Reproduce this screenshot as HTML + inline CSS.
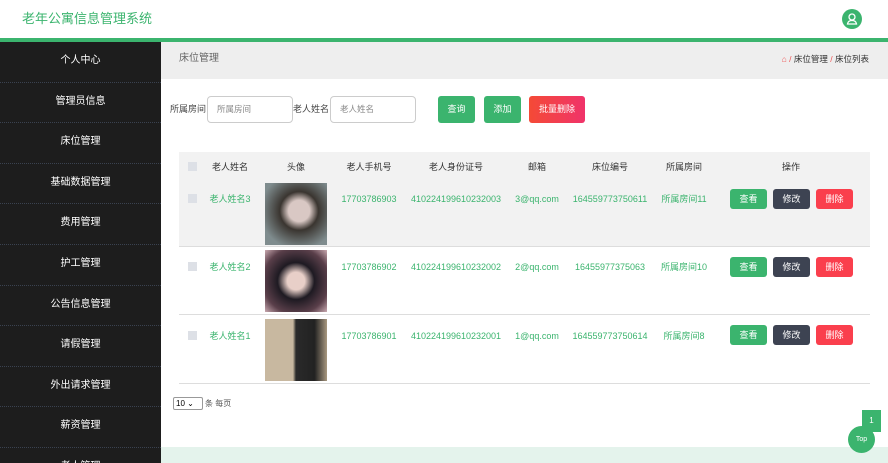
<!DOCTYPE html>
<html><head><meta charset="utf-8"><style>
*{box-sizing:border-box;margin:0;padding:0}
html,body{width:888px;height:463px;overflow:hidden}
body{font-family:"Liberation Sans","Noto Sans CJK SC",sans-serif;background:#fff;position:relative;font-size:9px}
.top{position:absolute;left:0;top:0;width:888px;height:42px;background:#fff;border-bottom:4px solid #3bb46e}
.title{position:absolute;left:22px;top:10px;font-size:13px;line-height:18px;color:#3bb46e}
.user{position:absolute;left:842px;top:9px;width:20px;height:20px;border-radius:50%;background:#3bb46e}
.side{position:absolute;left:0;top:42px;width:161px;height:421px;background:#1d1d1d;overflow:hidden}
.side div{height:40.6px;line-height:36px;padding-top:1px;text-align:center;color:#fff;font-size:10px;border-bottom:1px dotted #3a4250}
.crumb{position:absolute;left:161px;top:42px;width:727px;height:37px;background:#eee}
.crumb .h{position:absolute;left:18px;top:10px;font-size:10px;line-height:14px;color:#666}
.crumb .r{position:absolute;right:19px;top:11px;font-size:8.5px;line-height:12px;color:#333}
.crumb .r i{color:#e55;font-style:normal}
.lbl{position:absolute;top:103px;font-size:9px;line-height:12px;color:#444}
.inp{position:absolute;top:96px;height:27px;border:1px solid #ccc;border-radius:4px;font-size:8.5px;line-height:25px;color:#888;padding-left:9px}
.btn{position:absolute;color:#fff;border-radius:3px;text-align:center;font-size:9px}
.tbl{position:absolute;left:179px;top:152px;width:691px;height:232px;border-bottom:1px solid #ddd}
.hdr{position:absolute;left:0;top:0;width:691px;height:28px;background:#f2f2f2}
.row{position:absolute;left:0;width:691px;height:68px;border-bottom:1px solid #ddd}
.c{position:absolute;font-size:9px;line-height:12px;transform:translateX(-50%);white-space:nowrap}
.hd{color:#333;top:9px}
.g{color:#3bb46e}
.cb{position:absolute;left:9px;width:9px;height:9px;background:#dde0e6}
.av{position:absolute;left:86px;top:2px;width:62px;height:62px}
.ob{position:absolute;width:37px;height:20px;line-height:20px;border-radius:3px;color:#fff;text-align:center;font-size:9px}
</style></head><body>
<div class="top"><span class="title">老年公寓信息管理系统</span>
<div class="user"><svg width="20" height="20" viewBox="0 0 20 20"><circle cx="10" cy="8" r="3" fill="none" stroke="#fff" stroke-width="1.3"/><path d="M5.5 15 Q6 11.5 10 11.5 Q14 11.5 14.5 15 Z" fill="none" stroke="#fff" stroke-width="1.3"/></svg></div></div>
<div class="side">
<div>个人中心</div><div>管理员信息</div><div>床位管理</div><div>基础数据管理</div><div>费用管理</div><div>护工管理</div><div>公告信息管理</div><div>请假管理</div><div>外出请求管理</div><div>薪资管理</div><div>老人管理</div>
</div>
<div class="crumb"><span class="h">床位管理</span><span class="r"><i>⌂</i> <i>/</i> 床位管理 <i>/</i> 床位列表</span></div>
<span class="lbl" style="left:170px">所属房间</span>
<div class="inp" style="left:207px;width:86px">所属房间</div>
<span class="lbl" style="left:293px">老人姓名</span>
<div class="inp" style="left:330px;width:86px">老人姓名</div>
<div class="btn" style="left:438px;top:96px;width:37px;height:27px;line-height:27px;background:#3bb46e">查询</div>
<div class="btn" style="left:484px;top:96px;width:37px;height:27px;line-height:27px;background:#3bb46e">添加</div>
<div class="btn" style="left:529px;top:96px;width:56px;height:27px;line-height:27px;background:linear-gradient(90deg,#f44a36,#f0336a)">批量删除</div>
<div class="tbl">
<div class="hdr">
<div class="cb" style="top:10px"></div>
<span class="c hd" style="left:51px">老人姓名</span><span class="c hd" style="left:117px">头像</span><span class="c hd" style="left:190px">老人手机号</span><span class="c hd" style="left:277px">老人身份证号</span><span class="c hd" style="left:358px">邮箱</span><span class="c hd" style="left:431px">床位编号</span><span class="c hd" style="left:505px">所属房间</span><span class="c hd" style="left:612px">操作</span>
</div>
<div class="row" style="top:28px;background:#f2f2f2;height:67px">
<div class="cb" style="top:14px"></div>
<span class="c g" style="left:51px;top:13px">老人姓名3</span>
<div class="av" style="top:3px;background:radial-gradient(circle at 55% 45%,#d9c8c4 0 22%,#3a3530 40%,#7f8c8e 80%)"></div>
<span class="c g" style="left:190px;top:13px">17703786903</span><span class="c g" style="left:277px;top:13px">410224199610232003</span><span class="c g" style="left:358px;top:13px">3@qq.com</span><span class="c g" style="left:431px;top:13px">164559773750611</span><span class="c g" style="left:505px;top:13px">所属房间11</span>
<div class="ob" style="left:551px;top:9px;background:#3bb46e">查看</div><div class="ob" style="left:594px;top:9px;background:#3d4352">修改</div><div class="ob" style="left:637px;top:9px;background:#fa3f4d">删除</div>
</div>
<div class="row" style="top:95px">
<div class="cb" style="top:15px"></div>
<span class="c g" style="left:51px;top:14px">老人姓名2</span>
<div class="av" style="top:3px;background:radial-gradient(circle at 50% 50%,#e8cfc8 0 20%,#1e1a22 42%,#5a3f4a 75%,#c9a9b0)"></div>
<span class="c g" style="left:190px;top:14px">17703786902</span><span class="c g" style="left:277px;top:14px">410224199610232002</span><span class="c g" style="left:358px;top:14px">2@qq.com</span><span class="c g" style="left:431px;top:14px">16455977375063</span><span class="c g" style="left:505px;top:14px">所属房间10</span>
<div class="ob" style="left:551px;top:10px;background:#3bb46e">查看</div><div class="ob" style="left:594px;top:10px;background:#3d4352">修改</div><div class="ob" style="left:637px;top:10px;background:#fa3f4d">删除</div>
</div>
<div class="row" style="top:164px;border-bottom:none">
<div class="cb" style="top:15px"></div>
<span class="c g" style="left:51px;top:14px">老人姓名1</span>
<div class="av" style="top:3px;background:linear-gradient(90deg,#c8b8a0 0 45%,#2a2a2a 50%,#222 80%,#a89880)"></div>
<span class="c g" style="left:190px;top:14px">17703786901</span><span class="c g" style="left:277px;top:14px">410224199610232001</span><span class="c g" style="left:358px;top:14px">1@qq.com</span><span class="c g" style="left:431px;top:14px">164559773750614</span><span class="c g" style="left:505px;top:14px">所属房间8</span>
<div class="ob" style="left:551px;top:9px;background:#3bb46e">查看</div><div class="ob" style="left:594px;top:9px;background:#3d4352">修改</div><div class="ob" style="left:637px;top:9px;background:#fa3f4d">删除</div>
</div>
</div>
<div style="position:absolute;left:173px;top:397px;width:30px;height:13px;border:1px solid #999;border-radius:2px;font-size:8px;padding-left:2px;line-height:11px">10 ⌄</div>
<span style="position:absolute;left:205px;top:398px;font-size:8px;line-height:11px;color:#555">条 每页</span>
<div style="position:absolute;left:161px;top:447px;width:727px;height:16px;background:#e4f3ec"></div>
<div style="position:absolute;left:862px;top:410px;width:19px;height:22px;background:#3bb46e;color:#fff;font-size:8px;text-align:center;line-height:22px">1</div>
<div style="position:absolute;left:848px;top:426px;width:27px;height:27px;border-radius:50%;background:#3bb46e;color:#fff;font-size:7px;text-align:center;line-height:27px">Top</div>
</body></html>
